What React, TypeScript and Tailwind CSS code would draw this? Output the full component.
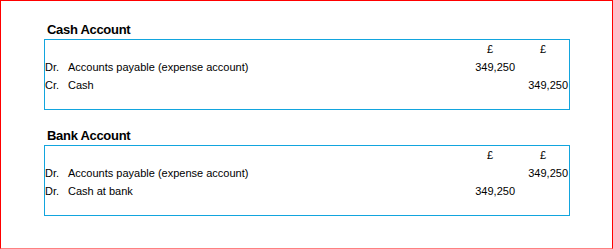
import React from 'react';

type Entry = { side: string; label: string; debit?: string; credit?: string };

const accounts: { title: string; entries: Entry[] }[] = [
  {
    title: 'Cash Account',
    entries: [
      { side: 'Dr.', label: 'Accounts payable (expense account)', debit: '349,250' },
      { side: 'Cr.', label: 'Cash', credit: '349,250' },
    ],
  },
  {
    title: 'Bank Account',
    entries: [
      { side: 'Dr.', label: 'Accounts payable (expense account)', credit: '349,250' },
      { side: 'Dr.', label: 'Cash at bank', debit: '349,250' },
    ],
  },
];

function AccountBox({ title, entries }: { title: string; entries: Entry[] }) {
  return (
    <div>
      <h2 className="pl-[3px] text-[13px] leading-[15px] font-bold tracking-[-0.3px] text-black mb-[2px]">{title}</h2>
      <div className="w-[526px] h-[71px] border border-[#12a5de] text-[11px] leading-[18px] text-black">
        <div className="flex">
          <div className="flex-1" />
          <div className="w-[53px] text-right pr-[22px]">£</div>
          <div className="w-[53px] text-right pr-[22px] mr-[1px]">£</div>
        </div>
        {entries.map((e, i) => (
          <div key={i} className="flex">
            <span className="w-[23px]">{e.side}</span>
            <span className="flex-1">{e.label}</span>
            <span className="w-[53px] text-right">{e.debit ?? ''}</span>
            <span className="w-[53px] text-right mr-[1px]">{e.credit ?? ''}</span>
          </div>
        ))}
      </div>
    </div>
  );
}

export default function App() {
  return (
    <div
      className="w-[613px] h-[249px] border border-[#ff0000] border-b-[#ff8080] bg-white pt-[21px] pl-[43px] flex flex-col gap-[18px]"
      style={{ fontFamily: '"Liberation Sans", Arial, sans-serif' }}
    >
      {accounts.map((a) => (
        <AccountBox key={a.title} title={a.title} entries={a.entries} />
      ))}
    </div>
  );
}
